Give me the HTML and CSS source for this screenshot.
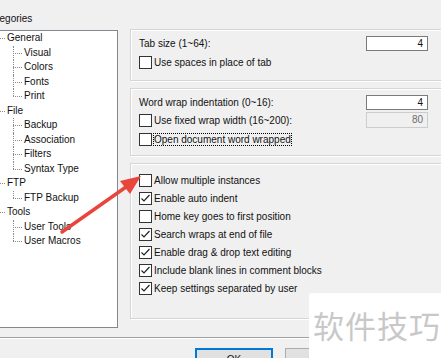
FILE: index.html
```html
<!DOCTYPE html>
<html lang="en">
<head>
    <meta charset="UTF-8">
    <title>Options</title>
    <link rel="stylesheet" href="styles.css">
</head>
<body>
    <div class="dialog">
        <div class="main">
            <div class="cats">
                <div class="cats-label">Categories</div>
                <ul class="tree">
                    <li><span>General</span>
                        <ul>
                            <li>Visual</li>
                            <li>Colors</li>
                            <li>Fonts</li>
                            <li>Print</li>
                        </ul>
                    </li>
                    <li><span>File</span>
                        <ul>
                            <li>Backup</li>
                            <li>Association</li>
                            <li>Filters</li>
                            <li>Syntax Type</li>
                        </ul>
                    </li>
                    <li><span>FTP</span>
                        <ul>
                            <li>FTP Backup</li>
                        </ul>
                    </li>
                    <li><span>Tools</span>
                        <ul>
                            <li>User Tools</li>
                            <li>User Macros</li>
                        </ul>
                    </li>
                </ul>
            </div>

            <div class="pane">
                <div class="group group-tab">
                    <div class="field">
                        <span>Tab size (1~64):</span>
                        <span class="input">4</span>
                    </div>
                    <div class="check"><span class="box"></span>Use spaces in place of tab</div>
                </div>

                <div class="group group-wrap">
                    <div class="field">
                        <span>Word wrap indentation (0~16):</span>
                        <span class="input">4</span>
                    </div>
                    <div class="field field-fixed">
                        <div class="check"><span class="box"></span>Use fixed wrap width (16~200):</div>
                        <span class="input disabled">80</span>
                    </div>
                    <div class="check check-last"><span class="box"></span><span class="focus">Open document word wrapped</span></div>
                </div>

                <div class="group group-misc">
                    <div class="check"><span class="box"></span>Allow multiple instances</div>
                    <div class="check"><span class="box on"></span>Enable auto indent</div>
                    <div class="check"><span class="box"></span>Home key goes to first position</div>
                    <div class="check"><span class="box on"></span>Search wraps at end of file</div>
                    <div class="check"><span class="box on"></span>Enable drag &amp; drop text editing</div>
                    <div class="check"><span class="box on"></span>Include blank lines in comment blocks</div>
                    <div class="check"><span class="box on"></span>Keep settings separated by user</div>
                </div>
            </div>
        </div>

        <div class="sep"></div>

        <div class="buttons">
            <button class="btn default">OK</button>
            <button class="btn">Cancel</button>
        </div>
    </div>

    <svg class="arrow" width="441" height="358" viewBox="0 0 441 358">
        <line x1="62" y1="232" x2="126" y2="187" stroke="#e8453c" stroke-width="3.5" stroke-linecap="round"/>
        <polygon points="141,176 120,181 130,194" fill="#e8453c"/>
    </svg>

    <div class="watermark">软件技巧</div>

    <script>
        document.querySelectorAll('.box.on').forEach(function (box) {
            box.innerHTML = '<svg width="11" height="11" viewBox="0 0 11 11"><polyline points="1.5,5.5 4,8 9.5,2" fill="none" stroke="#222" stroke-width="1.2"/></svg>';
        });
    </script>
</body>
</html>
```

FILE: styles.css
```css
html, body {
    margin: 0;
    padding: 0;
    background-color: #f0f0f0;
    overflow: hidden;
}

body {
    width: 441px;
    height: 358px;
    position: relative;
    font-family: "Liberation Sans", Arial, sans-serif;
    font-size: 10px;
    color: #111;
}

.dialog {
    margin-left: -30px;
    width: 490px;
}

.main {
    display: flex;
    align-items: flex-start;
}

/* left column */
.cats {
    width: 148px;
    padding-top: 12px;
}

.cats-label {
    line-height: 14px;
    padding-left: 14px;
}

.tree {
    list-style: none;
    margin: 4px 0 0 10px;
    padding: 0;
    box-sizing: border-box;
    width: 138px;
    height: 298px;
    background-color: #fff;
    border: 1px solid #828790;
}

.tree ul {
    list-style: none;
    margin: 0;
    padding: 0;
}

.tree li {
    position: relative;
    line-height: 14.5px;
    white-space: nowrap;
}

.tree > li {
    padding-left: 26px;
}

.tree > li::before {
    content: "";
    position: absolute;
    left: 19px;
    top: 7px;
    width: 5px;
    border-top: 1px dotted #8a8a8a;
}

.tree li li {
    padding-left: 17px;
}

.tree li li::before {
    content: "";
    position: absolute;
    left: 6px;
    top: 7px;
    width: 9px;
    border-top: 1px dotted #8a8a8a;
}

.tree li li::after {
    content: "";
    position: absolute;
    left: 6px;
    top: 0;
    bottom: 0;
    border-left: 1px dotted #8a8a8a;
}

.tree li li:last-child::after {
    bottom: auto;
    height: 7px;
}

/* right pane */
.pane {
    flex: 1;
    padding-top: 29px;
    margin-left: 12px;
}

.group {
    border: 1px solid #d5d5d5;
    box-shadow: inset 1px 1px 0 #fff, 1px 1px 0 #fff;
    padding: 6px 0 0 8px;
}

.group-tab {
    height: 44px;
}

.group-wrap {
    margin-top: 7px;
    height: 60px;
}

.group-misc {
    margin-top: 7px;
    padding-top: 6px;
    height: 148px;
}

.field {
    display: flex;
    justify-content: space-between;
    align-items: center;
    width: 289px;
    height: 15px;
}

.field-fixed {
    margin-top: 2px;
    height: 16px;
}

.input {
    box-sizing: border-box;
    width: 62px;
    height: 15px;
    line-height: 13px;
    background-color: #fff;
    border: 1px solid #7a7a7a;
    text-align: right;
    padding-right: 4px;
}

.input.disabled {
    height: 16px;
    line-height: 14px;
    background-color: #f0f0f0;
    border-color: #cccccc;
    color: #6d6d6d;
}

.check {
    display: flex;
    align-items: center;
    height: 16px;
    margin-top: 2px;
    white-space: nowrap;
}

.group-tab .check {
    margin-top: 3px;
}

.field-fixed .check {
    margin-top: 0;
}

.check-last {
    margin-top: 3px;
}

.box {
    box-sizing: border-box;
    width: 13px;
    height: 13px;
    margin-right: 2px;
    background-color: #fff;
    border: 1px solid #333;
    display: flex;
    align-items: center;
    justify-content: center;
}

.focus {
    outline: 1px dotted #000;
    outline-offset: 0;
}

/* bottom */
.sep {
    margin-top: 9px;
    border-top: 1px solid #a0a0a0;
    border-bottom: 1px solid #fff;
}

.buttons {
    display: flex;
    gap: 12px;
    padding: 9px 0 0 225px;
}

.btn {
    width: 78px;
    height: 23px;
    font-family: "Liberation Sans", Arial, sans-serif;
    font-size: 10px;
    color: #111;
    background-color: #e1e1e1;
    border: 1px solid #adadad;
    padding: 0;
}

.btn.default {
    border: 2px solid #0078d7;
}

/* overlays */
.arrow {
    position: absolute;
    left: 0;
    top: 0;
    pointer-events: none;
}

.watermark {
    position: absolute;
    left: 309px;
    top: 293px;
    right: 0;
    bottom: 0;
    background-color: #fff;
    border-top-left-radius: 3px;
    padding: 15px 0 0 4px;
    font-family: "Noto Sans CJK SC", sans-serif;
    font-size: 31px;
    line-height: 34px;
    color: #c8c8c8;
    letter-spacing: 1px;
}
```
